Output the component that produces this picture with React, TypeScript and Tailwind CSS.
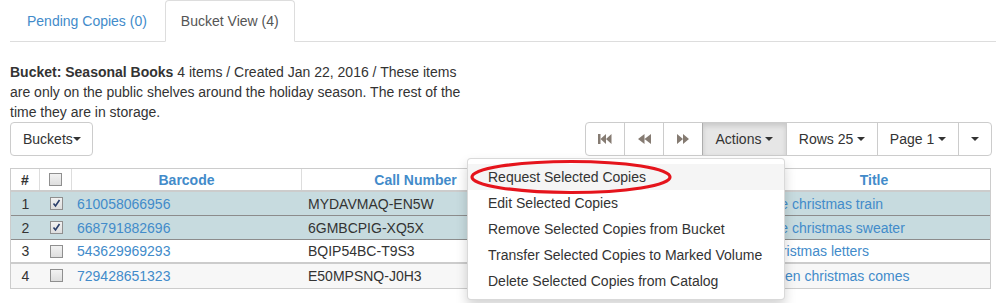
import React from 'react';

const rows = [
  { n: 1, barcode: '610058066956', call: 'MYDAVMAQ-EN5W', title: 'The christmas train', selected: true },
  { n: 2, barcode: '668791882696', call: '6GMBCPIG-XQ5X', title: 'The christmas sweater', selected: true },
  { n: 3, barcode: '543629969293', call: 'BQIP54BC-T9S3', title: 'Christmas letters', selected: false },
  { n: 4, barcode: '729428651323', call: 'E50MPSNQ-J0H3', title: 'When christmas comes', selected: false },
];

const actions = [
  'Request Selected Copies',
  'Edit Selected Copies',
  'Remove Selected Copies from Bucket',
  'Transfer Selected Copies to Marked Volume',
  'Delete Selected Copies from Catalog',
];

function Caret() {
  return (
    <span className="inline-block w-0 h-0 border-t-[4px] border-x-[4px] border-x-transparent border-t-[#333] align-middle" />
  );
}

function Checkbox({ checked }: { checked?: boolean }) {
  return (
    <span className="relative inline-block w-[13px] h-[13px] border border-[#8f8f8f] bg-gradient-to-b from-[#f2f2f2] to-[#dedede]">
      {checked && (
        <svg className="absolute left-[1px] top-[1px]" width="9" height="9" viewBox="0 0 9 9">
          <path d="M1.5 4.5 L3.5 7 L7.5 1" fill="none" stroke="#2a3e6a" strokeWidth="1.6" />
        </svg>
      )}
    </span>
  );
}

const cols = 'grid grid-cols-[29px_32px_230px_228px_228px_232px]';

export default function App() {
  return (
    <div className="w-[1005px] h-[303px] bg-white overflow-hidden font-['Liberation_Sans',Arial,sans-serif] text-[14px] leading-5 text-[#333]">
      {/* Tabs */}
      <div className="ml-[10px] w-[986px] flex border-b border-[#ddd] pl-[1px]">
        <div className="mb-[-1px] mr-[2px] px-[15px] py-[10px] border border-transparent text-[#428bca]">
          Pending Copies (0)
        </div>
        <div className="mb-[-1px] px-[15px] py-[10px] border border-[#ddd] border-b-white rounded-t bg-white text-[#555]">
          Bucket View (4)
        </div>
      </div>

      <div className="ml-[10px] w-[982px]">
        {/* Description */}
        <p className="mt-[20px] w-[468px]">
          <b>Bucket: Seasonal Books</b> 4 items / Created Jan 22, 2016 / These items are only on the public shelves
          around the holiday season. The rest of the time they are in storage.
        </p>

        {/* Toolbar */}
        <div className="flex justify-between items-start">
          <button className="w-[83px] h-[34px] pl-[12px] flex items-center border border-[#ccc] rounded bg-white">
            Buckets
            <Caret />
          </button>

          <div className="flex h-[34px] border border-[#ccc] rounded bg-white">
            <div className="w-[38px] flex items-center justify-center">
              <svg width="14" height="10" viewBox="0 0 14 10" fill="#857b72">
                <rect x="0" y="0" width="2.5" height="10" />
                <path d="M8 0 L2.5 5 L8 10 Z M13.5 0 L8 5 L13.5 10 Z" />
              </svg>
            </div>
            <div className="w-[39px] border-l border-[#ccc] flex items-center justify-center">
              <svg width="13" height="10" viewBox="0 0 13 10" fill="#857b72">
                <path d="M6.5 0 L0 5 L6.5 10 Z M13 0 L6.5 5 L13 10 Z" />
              </svg>
            </div>
            <div className="w-[39px] border-l border-[#ccc] flex items-center justify-center">
              <svg width="12" height="10" viewBox="0 0 12 10" fill="#857b72">
                <path d="M0 0 L6 5 L0 10 Z M6 0 L12 5 L6 10 Z" />
              </svg>
            </div>
            <div className="relative w-[84px] border-l border-[#adadad] bg-[#e6e6e6] shadow-[inset_0_3px_5px_rgba(0,0,0,0.125)] flex items-center justify-center gap-[4px]">
              Actions <Caret />
              {/* Dropdown */}
              <div className="absolute z-10 right-[1px] top-[35px] w-[318px] py-[5px] bg-white border border-black/15 rounded shadow-[0_6px_12px_rgba(0,0,0,0.175)]">
                {actions.map((a, i) => (
                  <div key={a} className={`px-5 py-[3px] whitespace-nowrap ${i === 0 ? 'bg-[#f5f5f5]' : ''}`}>
                    {a}
                  </div>
                ))}
                <svg className="absolute left-[-1px] top-0" width="208" height="38" viewBox="0 0 208 38">
                  <ellipse cx="104" cy="18" rx="99" ry="15.5" fill="none" stroke="#e5141c" strokeWidth="3.2" />
                </svg>
              </div>
            </div>
            <div className="w-[91px] border-l border-[#ccc] flex items-center justify-center gap-[4px]">
              Rows 25 <Caret />
            </div>
            <div className="w-[81px] border-l border-[#ccc] flex items-center justify-center gap-[4px]">
              Page 1 <Caret />
            </div>
            <div className="w-[33px] border-l border-[#ccc] flex items-center justify-center">
              <Caret />
            </div>
          </div>
        </div>

        {/* Table */}
        <div className="mt-[12px] w-[981px] border border-[#ccc]">
          <div className={`${cols} h-[23px] border-b-2 border-[#ccc] font-bold`}>
            <div className="border-r border-[#ddd] flex items-center justify-center">#</div>
            <div className="border-r border-[#ddd] flex items-center justify-center">
              <Checkbox />
            </div>
            <div className="border-r border-[#ddd] flex items-center justify-center text-[#428bca]">Barcode</div>
            <div className="border-r border-[#ddd] flex items-center justify-center text-[#428bca]">Call Number</div>
            <div className="border-r border-[#ddd] flex items-center justify-center text-[#428bca]">Location</div>
            <div className="flex items-center justify-center text-[#428bca]">Title</div>
          </div>
          {rows.map((r) => (
            <div
              key={r.n}
              className={`${cols} h-[24px] border-b ${
                r.selected
                  ? 'bg-[#c7dbdf] border-[#8c8c8c]'
                  : r.n === 4
                  ? 'bg-[#f7f7f7] border-transparent'
                  : 'bg-white border-[#ccc]'
              } ${r.n === 3 ? 'border-b-2' : ''} ${r.n === 4 ? 'h-[23px]' : ''}`}
            >
              <div className="flex items-center justify-center">{r.n}</div>
              <div className="flex items-center justify-center">
                <Checkbox checked={r.selected} />
              </div>
              <div className="flex items-center px-[5px] text-[#428bca]">{r.barcode}</div>
              <div className="flex items-center px-[6px]">{r.call}</div>
              <div className="flex items-center px-[6px]">Main Stacks</div>
              <div className="flex items-center px-[6px] text-[#428bca]">{r.title}</div>
            </div>
          ))}
        </div>
      </div>
    </div>
  );
}
